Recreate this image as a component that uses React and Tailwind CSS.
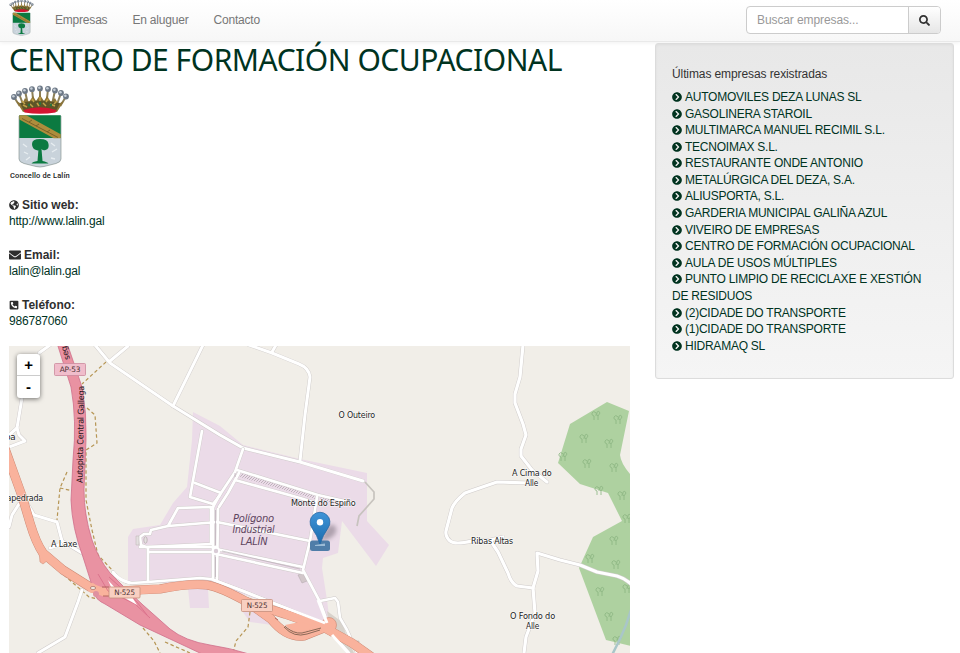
import React from "react";
import { FaGlobeAmericas, FaEnvelope, FaPhoneSquareAlt, FaChevronCircleRight, FaSearch } from "react-icons/fa";

const companies = [
  "AUTOMOVILES DEZA LUNAS SL",
  "GASOLINERA STAROIL",
  "MULTIMARCA MANUEL RECIMIL S.L.",
  "TECNOIMAX S.L.",
  "RESTAURANTE ONDE ANTONIO",
  "METALÚRGICA DEL DEZA, S.A.",
  "ALIUSPORTA, S.L.",
  "GARDERIA MUNICIPAL GALIÑA AZUL",
  "VIVEIRO DE EMPRESAS",
  "CENTRO DE FORMACIÓN OCUPACIONAL",
  "AULA DE USOS MÚLTIPLES",
  "PUNTO LIMPIO DE RECICLAXE E XESTIÓN DE RESIDUOS",
  "(2)CIDADE DO TRANSPORTE",
  "(1)CIDADE DO TRANSPORTE",
  "HIDRAMAQ SL",
];

// Crown and shield of Lalín, drawn in a 60 x 84 box
function Crest({ className }) {
  const pearls = [[4, 13], [9, 9.5], [15, 7], [22, 5.2], [30, 4.4], [38, 5], [45, 6.5], [51, 9], [56, 12.5]];
  return (
    <svg viewBox="0 0 60 84" preserveAspectRatio="none" className={className}>
      {pearls.map(([x, y]) => (
        <path key={x} d={`M${x} ${y}L${30 + (x - 30) * 0.78} 22`} stroke="#8d8058" strokeWidth="2" />
      ))}
      <path d="M6 17l6 3 3-6 4 4 4-6 3 5 4-6 4 6 3-5 4 6 4-4 3 6 6-3-7 11q-17-5-34 0z" fill="#8c7436" />
      <path d="M10 19q20-5 40 0l-4 8q-16-5-32 0z" fill="#5e5527" />
      <path d="M13 21l4 2m3-3l3 3m4-4l2 3m4-3l3 3m4-2l5 2M12 17l3 3M22 15l2 3M30 13v4M38 15l-2 3M47 17l-3 3" stroke="#c2a149" strokeWidth="1.5" />
      <path d="M18 21h2M29 19.500h2M40 21h2" stroke="#27733f" strokeWidth="2.500" />
      <path d="M13.500 26q16.500-5.500 33 0l-1 2.400q-15.500 2.600-31 0z" fill="#d31531" />
      {pearls.map(([x, y]) => (
        <g key={x}>
          <circle cx={x} cy={y} r="2.900" fill="#6d7886" />
          <circle cx={x - 0.6} cy={y - 0.7} r="1.300" fill="#c6cfd8" />
        </g>
      ))}
      <path d="M9 32h42v43q0 3-5 4.500l-12 3q-4 1-8 0l-12-3q-5-1.500-5-4.500z" fill="#c9d3db" stroke="#7c8a87" strokeWidth=".6" />
      <path d="M9.300 31.300h41.400v22.700h-41.400z" fill="#0b7a41" />
      <path d="M9.300 31.300h7l34.400 19v4h-7L9.300 35.500z" fill="#ad8d3c" />
      <path d="M12 34.500l36 19M19 38l3-2m4 6l3-2m8 8l3-2" stroke="#6e5624" strokeWidth=".8" fill="none" />
      <path d="M13 60l4 3m-3 5l4 2m-2 6l4-3m21-14l4 3m-3 6l5-3m-6 9l4 1" stroke="#e7edf1" strokeWidth="1.300" />
      <path d="M28.500 65h3l1 12q5 1 6 2.600H21.500q1-2 6-2.600z" fill="#0b7a41" />
      <path d="M22 60q0-5 8-5t8.500 5q1 5-3 6-2.500.800-4-1-1.500 2-4.500 1.200-5-1-5-6.200z" fill="#0b7a41" />
    </svg>
  );
}

const whiteRoads = [
  "M95 345L110 363 173 406 220 435 243 448 300 462 363 481",
  "M128 346L110 361",
  "M203 345L173 406",
  "M249 345L272 353 299 364Q309 368 310 377L305 415 300 461",
  "M276 345L272 352",
  "M50 345L39 353",
  "M22 398L17 428 19 435 25 441 9 447",
  "M17 428L9 435",
  "M27 503L34 515 57 522 62 541 82 553",
  "M9 527L12 515 19 504",
  "M82 590L78 602 65 637 38 653",
  "M50 548L61 544",
];
const thinRoads = [
  "M202 431L190 497 213 504 220 495",
  "M195 483L221 493",
  "M168 526L178 508 211 507V544L146 547 141 545 140 537 144 534 150 534 151 530 168 526 217 522",
  "M140 547H216M150 552H216M148 547V582",
  "M113 572Q120 582 132 583L148 582 200 578 211 579 243 591 273 603 327 625",
  "M213 507V579M218 509L217 579",
  "M213 507L219 496 235 472 243 449",
  "M219 507L228 493 239 473",
  "M217 522L310 541",
  "M216 549L303 567M216 554L303 573",
  "M237 470L318 495 353 503",
  "M235 480L300 498 316 503",
  "M317 497L310 541 303 570 320 602 328 624",
  "M320 601L335 598 338 602 340 618 347 630 357 653",
  "M330 632L349 653",
];
const eastRoads = [
  "M523 345L520 377 515 394 515 403 523 424 526 435 521 449 521 456 532 470 547 482",
  "M530 483L497 482 465 493Q455 501 452 508L446 531Q445 536 450 541 455 545 472 541L490 540 498 552 508 573Q511 583 517 586L533 588 535 613 526 637 524 653",
  "M533 588L538 571 537 553 560 560 580 565 597 572 617 576Q624 578 631 584",
  "M490 540L503 537",
];
const footPaths = [
  "M106 362L82 384",
  "M87 408L95 415 97 443 86 450 86 500 92 530 98 555 113 571",
  "M67 472L60 488 57 520M60 488L73 491",
  "M143 628L154 641 160 653M165 642L190 653",
  "M250 612L248 627 236 641 233 653",
  "M64 575L89 597 98 599",
];
const trees = [[596, 416], [618, 420], [584, 439], [609, 444], [563, 457], [587, 464], [614, 468], [599, 491], [622, 496], [627, 519], [614, 541], [590, 559], [616, 565], [600, 592], [627, 589], [609, 617], [617, 641]];
const labels = [
  ["O Outeiro", 338.5, 417.5, 36.5],
  ["A Cima do", 512, 475.5, 39.5],
  ["Alle", 525, 485.5, 13],
  ["Ribas Altas", 471, 543.8, 42],
  ["O Fondo do", 510, 619, 45],
  ["Alle", 526, 629, 13],
  ["A Laxe", 51, 546.5, 26],
  ["Monte do Espiño", 291, 506, 64.5],
  ["apedrada", 6.5, 501, 36.5],
  ["ba", 5, 439.500, 10.5],
];

function Roads({ list, width }) {
  return (
    <g fill="none" strokeLinejoin="round" strokeLinecap="round">
      {list.map((d) => <path key={d} d={d} stroke="#cfcbca" strokeWidth={width + 0.9} />)}
      {list.map((d) => <path key={d} d={d} stroke="#fff" strokeWidth={width} />)}
    </g>
  );
}

function Shield({ x, y, w, h, fill, stroke, children }) {
  return (
    <g>
      <rect x={x} y={y} width={w} height={h} rx="1" fill={fill} stroke={stroke} strokeWidth=".8" />
      <text x={x + w / 2} y={y + h / 2 + 2.7} textAnchor="middle" fontSize="7.5" textLength={w - 10.5} lengthAdjust="spacingAndGlyphs" fill="#4b2f31">{children}</text>
    </g>
  );
}

function MapDrawing() {
  const orange = [
    "M4 446L13 471 22 496 30 523Q36 543 43 553L63 570 90 587 103 592 137 590 160 589Q190 583 207 585 220 587 247 602L271 619Q286 638 304 636L329 626",
    "M247 602L285 614 325 628 352 643 376 660",
  ];
  return (
    <svg viewBox="9 346 621 307" className="block h-[307px] w-[621px] font-['DejaVu_Sans',sans-serif]">
      <defs>
        <pattern id="hatch" width="3" height="3" patternUnits="userSpaceOnUse">
          <path d="M0 3L3 0" stroke="#aaa0a7" strokeWidth=".7" />
        </pattern>
        <linearGradient id="pin" x1="0" x2="0" y1="0" y2="1">
          <stop offset="0" stopColor="#3f94d8" />
          <stop offset="1" stopColor="#1c6cad" />
        </linearGradient>
        <filter id="soft" x="-50%" y="-50%" width="200%" height="200%"><feGaussianBlur stdDeviation="2" /></filter>
      </defs>
      <rect x="9" y="346" width="621" height="307" fill="#f1eee8" />
      <path d="M193 412L220 426 243 445 300 459 367 473V521L389 545 376 566 342 521 338 553 323 558 322 568 327 600 330 624 210 583 128 583V537L133 529 160 525 173 503 187 487 192 440z" fill="#ebdbe8" />
      <path d="M188 588h20l1 20h-19zM240 608l20 5 12 12-22-3z" fill="#ebdbe8" />
      <path d="M607 402L629 411 620 455Q621 464 631 475V646L606 640 579 568 593 537 622 521 608 493 580 484 558 463 570 424z" fill="#aed1a0" />
      <g fill="none" stroke="#8cb581" strokeWidth=".8">
        {trees.map(([x, y]) => (
          <path key={`${x}-${y}`} d={`M${x - 2} ${y + 4}v-4q-3-1-2-3t3-1q2 1 1 4M${x + 2} ${y + 4}v-4q-2-1-1-4 2-2 3 1l-2 3`} />
        ))}
      </g>
      <path d="M631 610L626 625 620 639 612 655" fill="none" stroke="#a9c6c9" strokeWidth="2.5" />
      <path d="M327 611L342 622 348 640 354 653H347L330 631z" fill="#d8d3cc" />
      <path d="M365 482L374 492 374 499 359 516 357 526" fill="none" stroke="#c7c3be" strokeWidth="1.700" />
      <path d="M242 472L315 493V499L240 477z" fill="url(#hatch)" />
      <path d="M322 495L350 503 345 506 320 500z" fill="url(#hatch)" />
      <path d="M298 575l5-2 4 8-5 2z" fill="#d2c7ca" stroke="#b6abb0" strokeWidth=".6" />
      <path d="M355 641h4v4h-4z" fill="#d6d1cc" stroke="#b7b3ae" strokeWidth=".5" />
      <g fill="none" stroke="#b69554" strokeWidth="1.2" strokeDasharray="3.500 2.500">
        {footPaths.map((d) => <path key={d} d={d} />)}
      </g>
      <Roads list={whiteRoads} width={3} />
      <Roads list={thinRoads} width={2.7} />
      <Roads list={eastRoads} width={3.2} />
      <path d="M215.500 510V545M215.500 557V577M222 551L300 569M235 473v4" stroke="#b9aeb6" strokeWidth=".7" />
      <circle cx="216" cy="551" r="3.200" fill="#d9ccd6" stroke="#fff" strokeWidth="2" />
      <ellipse cx="145.500" cy="540" rx="1.700" ry="3.300" fill="#e4dfe0" stroke="#aaa0a0" strokeWidth=".6" />
      <path d="M136 536h3v9h-3z" fill="#e4dfe0" stroke="#b8b0b2" strokeWidth=".5" />
      <g fill="none" strokeLinecap="round" strokeLinejoin="round">
        {orange.map((d) => <path key={d} d={d} stroke="#c98671" strokeWidth="9.200" />)}
      </g>
      <path d="M39 552l1 10 3 2 9-7z" fill="#f9b29c" stroke="#c98671" strokeWidth=".5" />
      <circle cx="329" cy="625" r="7.500" fill="#f9b29c" stroke="#c98671" strokeWidth=".6" />
      <path d="M57 343L71 387Q77 420 73 460L71 500Q72 528 83 557L90 579 94 593Q96 600 105 604L140 625 185 646 202 654H249Q230 648 210 645 185 641 170 629L143 605 125 588 110 573Q98 558 92 540 84 515 84 490L86 440Q87 413 82 387L67 343z" fill="#e992a2" stroke="#cf6f8a" strokeWidth=".8" />
      <g fill="none" stroke="#f9b29c" strokeLinecap="round" strokeLinejoin="round">
        {orange.map((d) => <path key={d} d={d} strokeWidth="8.300" />)}
        <circle cx="137" cy="592" r="4.500" fill="#f9b29c" />
        <circle cx="92" cy="588" r="4.500" fill="#f9b29c" />
      </g>
      <path d="M104 585L112 592 123 603 141 612 150 619 137 602 137 598 120 584z" fill="#e992a2" />
      <path d="M98 574L108 591 135 604 150 618M109 577L137 602 147 615" fill="none" stroke="#d86c88" strokeWidth=".8" />
      <path d="M108 580L117 590 111 587zM123 597h9l5 8z" fill="#fff" />
      <path d="M102 587h7M103 596h7" stroke="#b4665e" strokeWidth="1" />
      <ellipse cx="93" cy="588" rx="2.700" ry="1.500" fill="#f1eee8" stroke="#aa7569" strokeWidth=".8" />
      <circle cx="96" cy="594" r="3" fill="#df91a0" />
      <path d="M285 626Q293 634 302 633L321 628M284 627Q294 638 307 634L320 630" fill="none" stroke="#5c493a" strokeWidth=".7" />
      <path d="M285 625Q292 633 303 632L318 627 300 622z" fill="#f9b29c" />
      <path d="M275 618l3 2" stroke="#b4665e" strokeWidth="1" />
      <path d="M214 580L243 591 273 603 325 623" fill="none" stroke="#fff" strokeWidth="2.700" />
      <path d="M318 600L327 623M332 635L350 655" stroke="#fff" strokeWidth="3" />
      <path d="M113 572Q117 579 130 583" fill="none" stroke="#fff" strokeWidth="3" />

      <Shield x={54.500} y={363.500} w={31} h={12} fill="#f0bdcb" stroke="#cb899c">AP-53</Shield>
      <Shield x={109} y={587} w={31} h={11} fill="#f9cfc1" stroke="#c78f7c">N-525</Shield>
      <Shield x={241.500} y={599.500} w={31} h={12} fill="#f9cfc1" stroke="#c78f7c">N-525</Shield>
      <text transform="translate(82.500 483) rotate(-89)" fontSize="8.400" textLength="97" lengthAdjust="spacingAndGlyphs" fill="#1f1519">Autopista Central Gallega</text>
      <text transform="translate(70 359) rotate(-106)" fontSize="8" textLength="14" lengthAdjust="spacingAndGlyphs" fill="#1f1519">seg</text>
      <g fontSize="8.300" fill="#222" stroke="#fff" strokeWidth="1.200" strokeOpacity=".75" paintOrder="stroke">
        {labels.map(([t, x, y, w]) => (
          <text key={`${t}${y}`} x={x} y={y} textLength={w} lengthAdjust="spacingAndGlyphs">{t}</text>
        ))}
      </g>
      <g fontSize="9.900" fontStyle="italic" fill="#60455f">
        <text x="233" y="521.500" textLength="41" lengthAdjust="spacingAndGlyphs">Polígono</text>
        <text x="232.500" y="533.200" textLength="42" lengthAdjust="spacingAndGlyphs">Industrial</text>
        <text x="240.500" y="544.700" textLength="27" lengthAdjust="spacingAndGlyphs">LALÍN</text>
      </g>

      <path d="M319 542l8-15q7-5 9 1t-7 11z" fill="#544c58" opacity=".4" filter="url(#soft)" />
      <rect x="310" y="540.500" width="20" height="10.500" rx="2.500" fill="#4f7da8" />
      <path d="M315 545l10-1.500v2.500h-10z" fill="#9bbbd6" />
      <path d="M320 544Q317 535 312 528A9.900 9.900 0 1 1 328 528Q323 535 320 544z" fill="url(#pin)" stroke="#2467a3" strokeWidth=".8" />
      <circle cx="320" cy="522.300" r="3.200" fill="#fff" />
    </svg>
  );
}

function Contact({ icon: Icon, iconClass, title, value }) {
  return (
    <div className="h-[50.200px] leading-[16.600px]">
      <div className="flex items-center gap-[3px] font-bold text-[#2f2f2f]">
        <Icon className={iconClass} />
        <span className="tracking-[0px]">{title}</span>
      </div>
      <a className="block text-[#00331f]">{value}</a>
    </div>
  );
}

export default function App() {
  return (
    <div className="h-[653px] w-[960px] overflow-hidden bg-white font-['Liberation_Sans',Arial,sans-serif] text-[12px] tracking-[-.2px] text-[#333]">
      <nav className="flex h-[42px] items-start border-b border-[#e9e9e9] bg-linear-to-b from-white to-[#f7f7f7] shadow-[0_1px_4px_rgba(0,0,0,0.06)]">
        <Crest className="mt-[-1px] ml-[9px] h-[37px] w-[25px]" />
        <div className="ml-[21px] flex gap-[25px] pt-[12px] leading-[16px] text-[#777]">
          <a>Empresas</a>
          <a>En aluguer</a>
          <a>Contacto</a>
        </div>
        <div className="mt-[6px] mr-[19px] ml-auto flex h-[28px] w-[195px] overflow-hidden rounded-[4px] border border-[#ccc] bg-white">
          <div className="flex-1 pl-[10px] leading-[26px] tracking-[-.1px] text-[#999]">Buscar empresas...</div>
          <div className="flex w-[32px] items-center justify-center border-l border-[#ccc] bg-linear-to-b from-white to-[#e6e6e6]">
            <FaSearch className="size-[11px] text-[#333]" />
          </div>
        </div>
      </nav>
      <div className="flex">
        <main className="ml-[9px] w-[621px]">
          <h1 className="h-[42px] pt-[1px] font-['Noto_Sans',sans-serif] text-[30px] leading-[34px] tracking-[-.48px] whitespace-nowrap text-[#00331f]">
            CENTRO DE FORMACIÓN OCUPACIONAL
          </h1>
          <Crest className="ml-[1px] block h-[84px] w-[60px]" />
          <div className="h-[28.500px] pt-[3px] pl-[1px] font-['Roboto',sans-serif] text-[7.500px] leading-[9px] font-medium tracking-[.14px] text-[#222]">
            Concello de Lalín
          </div>
          <Contact icon={FaGlobeAmericas} iconClass="size-[10px]" title="Sitio web:" value="http://www.lalin.gal" />
          <Contact icon={FaEnvelope} iconClass="size-[12px]" title="Email:" value="lalin@lalin.gal" />
          <Contact icon={FaPhoneSquareAlt} iconClass="size-[10px]" title="Teléfono:" value="986787060" />
          <div className="relative mt-[-1.500px] h-[307px]">
            <MapDrawing />
            <div className="absolute top-[8px] left-[8px] w-[23px] overflow-hidden rounded-[3px] bg-white text-center text-[15px] font-bold text-black shadow-[0_1px_5px_rgba(0,0,0,0.55)]">
              <div className="h-[22px] border-b border-[#ccc] leading-[22px]">+</div>
              <div className="h-[22px] leading-[22px]">-</div>
            </div>
          </div>
        </main>
        <aside className="mt-[1px] ml-[25px] h-[336px] w-[299px] rounded-[3px] border border-[#dcdcdc] bg-linear-to-b from-[#e8e8e8] to-[#f5f5f5] pt-[22px] pr-[16px] pl-[16px] shadow-[inset_0_1px_3px_rgba(0,0,0,0.05)]">
          <div className="h-[23px] leading-[17px] tracking-[-.1px]">Últimas empresas rexistradas</div>
          <ul className="leading-[16.580px] tracking-[-.24px] text-[#00331f]">
            {companies.map((name) => (
              <li key={name}>
                <FaChevronCircleRight className="mr-[3px] inline-block size-[10px] align-[-1px]" />
                {name}
              </li>
            ))}
          </ul>
        </aside>
      </div>
    </div>
  );
}
